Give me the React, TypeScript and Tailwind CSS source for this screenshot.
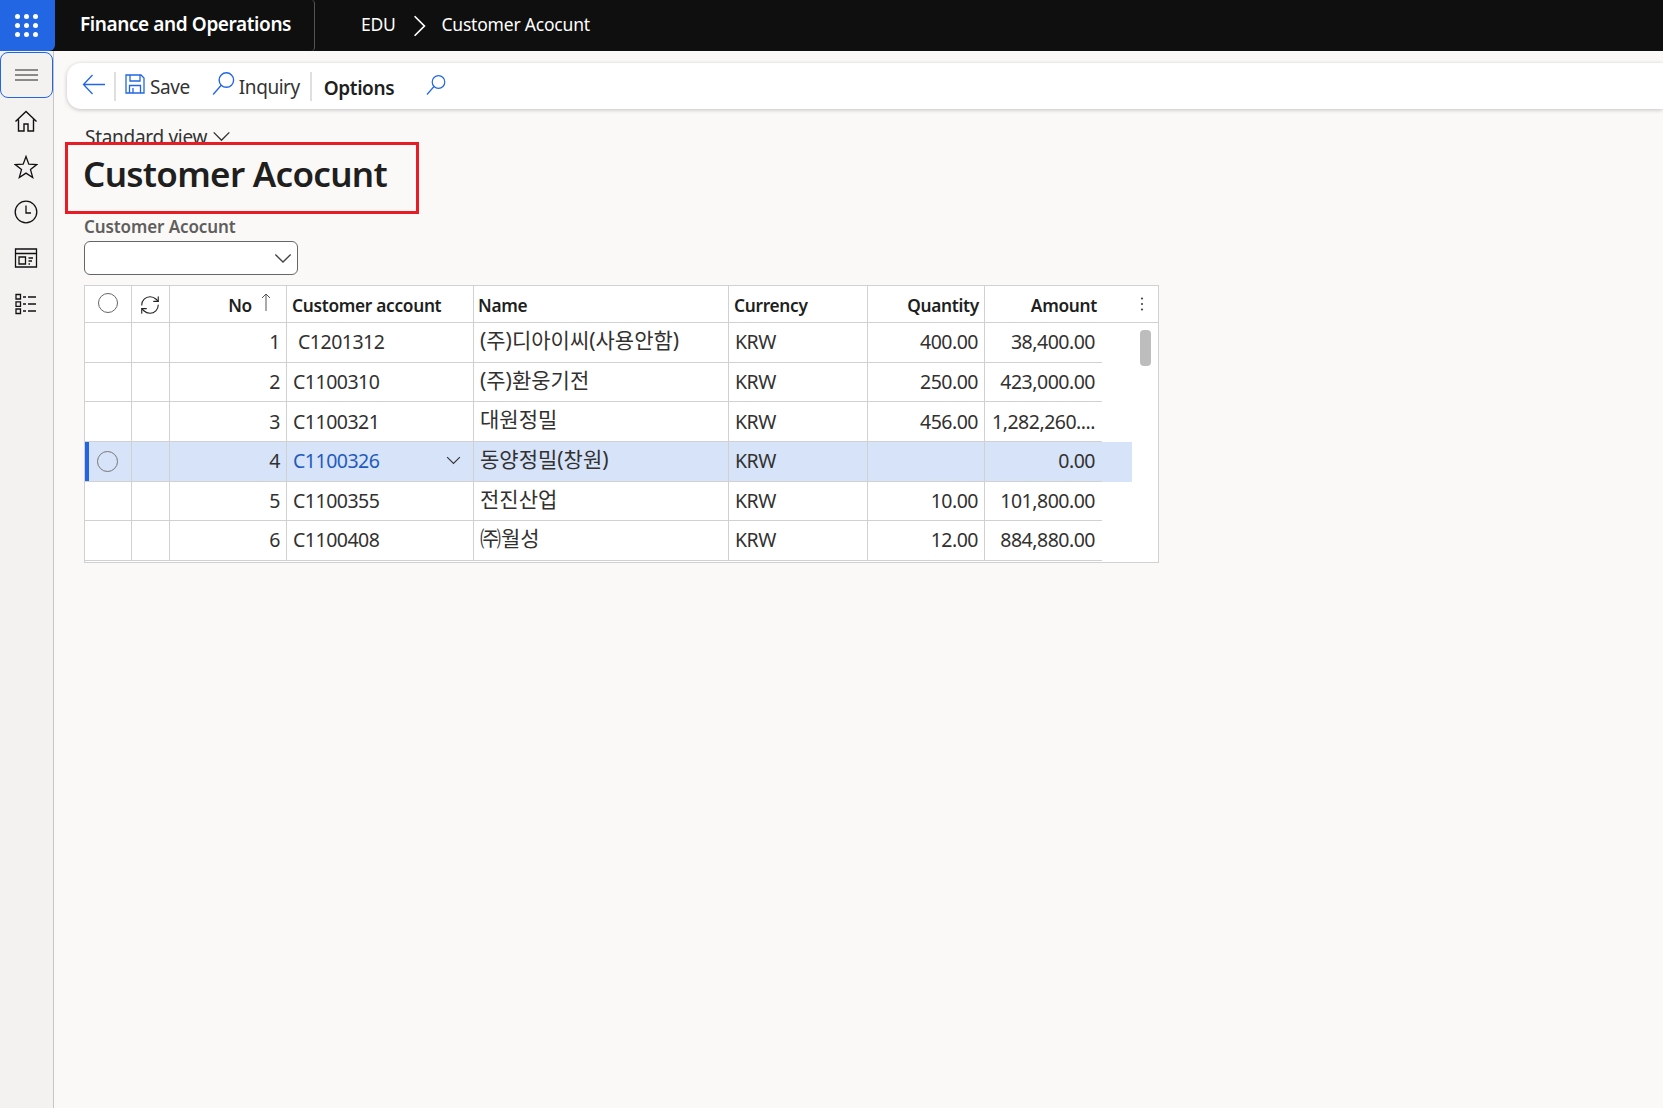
import React from 'react';
import { RefreshCw } from 'lucide-react';

const rows = [
  { no: 1, account: 'C1201312', name: '(주)디아이씨(사용안함)', currency: 'KRW', quantity: '400.00', amount: '38,400.00' },
  { no: 2, account: 'C1100310', name: '(주)환웅기전', currency: 'KRW', quantity: '250.00', amount: '423,000.00' },
  { no: 3, account: 'C1100321', name: '대원정밀', currency: 'KRW', quantity: '456.00', amount: '1,282,260....' },
  { no: 4, account: 'C1100326', name: '동양정밀(창원)', currency: 'KRW', quantity: '', amount: '0.00' },
  { no: 5, account: 'C1100355', name: '전진산업', currency: 'KRW', quantity: '10.00', amount: '101,800.00' },
  { no: 6, account: 'C1100408', name: '㈜월성', currency: 'KRW', quantity: '12.00', amount: '884,880.00' }
];

const SELECTED_NO = 4;

const Chevron = ({ className }: { className: string }) => (
  <svg viewBox="0 0 20 12" fill="none" stroke="currentColor" strokeWidth="1.5" className={className}>
    <path d="M1.500 1.500l8.500 8.500 8.500-8.500" />
  </svg>
);

const SearchGlass = ({ className }: { className: string }) => (
  <svg viewBox="0 0 20 20" fill="none" stroke="#2266e3" strokeWidth="1.2" className={className}>
    <circle cx="12.500" cy="7" r="6.300" />
    <path d="M8 11.500L1 19.500" />
  </svg>
);

const SideIcons = () => (
  <div className="flex flex-col items-center gap-[21.7px] mt-[11px] pr-[1px] text-[#111]">
    <svg viewBox="0 0 24 24" fill="none" stroke="currentColor" strokeWidth="1.4" className="w-6 h-6">
      <path d="M1.500 12.500L12 2.500l10.500 10M4.500 10.500V22h5.500v-7h4v7h5.500V10.500" />
    </svg>
    <svg viewBox="0 0 24 24" fill="none" stroke="currentColor" strokeWidth="1.3" className="w-6 h-6">
      <path d="M12 1.500l2.800 7.700 8 .4-6.300 5 2.200 7.900-6.700-4.400-6.700 4.400 2.200-7.900-6.300-5 8-.4z" />
    </svg>
    <svg viewBox="0 0 24 24" fill="none" stroke="currentColor" strokeWidth="1.3" className="w-6 h-6">
      <circle cx="12" cy="12" r="10.800" />
      <path d="M12 5.500V13h5" />
    </svg>
    <svg viewBox="0 0 24 24" fill="none" stroke="currentColor" strokeWidth="1.3" className="w-6 h-6">
      <path d="M1.500 3h21v18h-21zM1.500 7.500h21M5 11h6.500v7H5zM14.500 12h4.500M14.500 15h3.500M14.500 18h1.500" />
    </svg>
    <svg viewBox="0 0 24 24" fill="none" stroke="currentColor" strokeWidth="1.3" className="w-6 h-6">
      <path d="M2 2.500h4.500V7H2zM2 9.800h4.500v4.500H2zM2 17h4.500v4.500H2zM9 5h3M14 5h8M9 12h3M14 12h8M9 19h3M14 19h8" />
    </svg>
  </div>
);

const App: React.FC = () => {
  return (
    <div className="flex flex-col h-[1108px] overflow-hidden bg-[#faf9f8] text-[#201f1e] font-['Noto_Sans','Noto_Sans_CJK_KR',sans-serif]">
      {/* Top bar */}
      <div className="flex items-center h-[51px] shrink-0 bg-[#0f0f0f] text-white">
        <div className="flex items-center justify-center w-[55px] h-[51px] pr-[2px] bg-[#2266e3] rounded-br-[6px]">
          <div className="grid grid-cols-3 gap-[4px]">
            {Array.from({ length: 9 }).map((_, i) => (
              <span key={i} className="w-[5px] h-[5px] rounded-full bg-white" />
            ))}
          </div>
        </div>
        <div className="flex items-center w-[260px] h-full pl-[25px] pb-[3px] border-r border-[#555] rounded-r-[4px]">
          <span className="text-[19px] font-semibold tracking-[-0.4px] whitespace-nowrap">Finance and Operations</span>
        </div>
        <span className="ml-[46px] pb-[2px] text-[17.5px] tracking-[-0.3px]">EDU</span>
        <svg viewBox="0 0 12 20" fill="none" stroke="currentColor" strokeWidth="1.6" className="w-[13px] h-[22px] ml-[18px]">
          <path d="M1.500 1l9 9-9 9" />
        </svg>
        <span className="ml-[15px] pb-[2px] text-[17.5px] tracking-[-0.2px] whitespace-nowrap">Customer Acocunt</span>
      </div>

      <div className="flex flex-1 min-h-0">
        {/* Side navigation */}
        <div className="w-[54px] shrink-0 bg-[#f3f2f1] border-r border-[#c8c6c4]">
          <button className="flex items-center justify-center w-[53px] h-[46px] mt-[1px] border border-[#2266e3] rounded-[8px]">
            <svg viewBox="0 0 23 12" fill="none" stroke="#222" strokeWidth="1" className="w-[23px] h-[12px]">
              <path d="M0 1h23M0 6h23M0 11h23" />
            </svg>
          </button>
          <SideIcons />
        </div>

        <div className="flex-1 min-w-0">
          {/* Action bar */}
          <div className="flex items-center h-[46px] mt-[12px] ml-[13px] pl-[15px] bg-white rounded-l-[14px] shadow-[0_1px_4px_rgba(0,0,0,0.22)]">
            <svg viewBox="0 0 23 21" fill="none" stroke="#2266e3" strokeWidth="1.300" className="w-[23px] h-[21px] -mt-[3px]">
              <path d="M23 10.500H1.500M10.500 1l-9 9.500 9 9.500" />
            </svg>
            <span className="w-[2px] h-[29px] ml-[9px] bg-[#e1dfdd]" />
            <svg viewBox="0 0 20 20" fill="none" stroke="#2266e3" strokeWidth="1.300" className="w-[20px] h-[20px] ml-[9px] -mt-[5px]">
              <path d="M1 1h15l3 3v15H1zM5 1v6h10V1M4.500 19v-7.500h11V19M8 14v5" />
            </svg>
            <span className="ml-[5px] pt-[3px] text-[19px] text-[#333] tracking-[-0.4px]">Save</span>
            <SearchGlass className="w-[23px] h-[23px] ml-[22px] -mt-[6px]" />
            <span className="ml-[4px] pt-[3px] text-[19px] text-[#333] tracking-[-0.45px]">Inquiry</span>
            <span className="w-[2px] h-[29px] ml-[10px] bg-[#e1dfdd]" />
            <span className="ml-[12px] pt-[4px] text-[19px] font-semibold text-[#201f1e] tracking-[-0.4px]">Options</span>
            <SearchGlass className="w-[20px] h-[20px] ml-[32px] -mt-[3px]" />
          </div>

          {/* Form content */}
          <div className="pl-[30px]">
            <div className="flex items-center h-[26px] mt-[15px] pl-[1px] text-[19px] text-[#333] tracking-[-0.3px]">
              Standard view
              <Chevron className="w-[19px] h-[11px] ml-[5px] -mt-[2px]" />
            </div>

            <div className="relative flex items-start w-[354px] h-[72px] -mt-[8px] -ml-[19px] pl-[15px] pt-[6px] bg-[#faf9f8] border-[3px] border-[#e81c24]">
              <h1 className="text-[35px] leading-[46px] font-semibold tracking-[-0.7px] whitespace-nowrap text-[#201f1e]">Customer Acocunt</h1>
            </div>

            <div className="mt-[1px] h-[24px] leading-[24px] text-[17px] font-semibold text-[#605e5c] tracking-[-0.1px]">Customer Acocunt</div>

            <div className="flex items-center justify-end w-[214px] h-[34px] mt-[2px] pr-[5px] bg-white border border-[#666] rounded-[6px] text-[#444]">
              <Chevron className="w-[18px] h-[11px]" />
            </div>

            {/* Grid */}
            <div className="w-[1075px] mt-[10px] bg-white border border-[#d1d1d1] text-[19.5px] text-[#323130] tracking-[-0.5px]">
              <div className="flex h-[37px] border-b border-[#d1d1d1] text-[17.3px] font-semibold text-[#201f1e] tracking-[-0.3px]">
                <div className="flex items-center justify-center w-[47px] border-r border-[#d1d1d1]">
                  <span className="w-[20px] h-[20px] -mt-[2px] rounded-full border border-[#666]" />
                </div>
                <div className="flex items-center justify-center w-[38px] pr-[1px] border-r border-[#d1d1d1]">
                  <RefreshCw size={22} strokeWidth={1.2} className="text-[#222] mt-[1px]" />
                </div>
                <div className="flex items-center justify-end w-[117px] pr-[15px] pt-[3px] border-r border-[#d1d1d1]">
                  No
                  <svg viewBox="0 0 10 18" fill="none" stroke="#555" strokeWidth="1" className="w-[10px] h-[18px] ml-[9px] -mt-[7px]">
                    <path d="M5 18V1M1 5l4-4 4 4" />
                  </svg>
                </div>
                <div className="flex items-center w-[187px] pl-[5px] pt-[3px] border-r border-[#d1d1d1]">Customer account</div>
                <div className="flex items-center w-[255px] pl-[4px] pt-[3px] border-r border-[#d1d1d1]">Name</div>
                <div className="flex items-center w-[139px] pl-[5px] pt-[3px] border-r border-[#d1d1d1]">Currency</div>
                <div className="flex items-center justify-end w-[117px] pr-[5px] pt-[3px] border-r border-[#d1d1d1]">Quantity</div>
                <div className="flex items-center justify-end w-[117px] pr-[5px] pt-[3px]">Amount</div>
                <div className="flex flex-1 items-center justify-end pr-[14px] pb-[1px]">
                  <svg viewBox="0 0 4 14" fill="#333" className="w-[4px] h-[14px]">
                    <circle cx="2" cy="1.500" r="1" />
                    <circle cx="2" cy="7" r="1" />
                    <circle cx="2" cy="12.500" r="1" />
                  </svg>
                </div>
              </div>

              <div className="relative pb-[1px]">
                {rows.map((row) => {
                  const selected = row.no === SELECTED_NO;
                  return (
                    <div key={row.no} className="flex h-[39.67px]">
                      <div className={`flex border-b border-[#d1d1d1] ${selected ? 'bg-[#d6e3f9]' : 'bg-white'}`}>
                        <div className={`flex items-center justify-center w-[47px] border-r border-[#d1d1d1] ${selected ? 'border-l-[4px] border-l-[#2266e3] pr-[5px]' : ''}`}>
                          {selected && <span className="w-[21px] h-[21px] rounded-full border border-[#777]" />}
                        </div>
                        <div className="w-[38px] border-r border-[#d1d1d1]" />
                        <div className="flex items-center justify-end w-[117px] pr-[6px] pb-[1px] border-r border-[#d1d1d1]">{row.no}</div>
                        <div className={`flex items-center justify-between w-[187px] pb-[1px] border-r border-[#d1d1d1] ${row.no === 1 ? 'pl-[11px]' : 'pl-[6px]'}`}>
                          <span className={selected ? 'text-[#1f5bbd]' : ''}>{row.account}</span>
                          {selected && <Chevron className="w-[15px] h-[9px] mr-[12px] text-[#333]" />}
                        </div>
                        <div className="flex items-center w-[255px] pl-[6px] pb-[3px] border-r border-[#d1d1d1] whitespace-nowrap text-[21px] tracking-normal">{row.name}</div>
                        <div className="flex items-center w-[139px] pl-[6px] pb-[1px] border-r border-[#d1d1d1]">{row.currency}</div>
                        <div className="flex items-center justify-end w-[117px] pr-[6px] pb-[1px] border-r border-[#d1d1d1]">{row.quantity}</div>
                        <div className="flex items-center justify-end w-[117px] pr-[7px] pb-[1px] whitespace-nowrap">{row.amount}</div>
                      </div>
                      {selected && <div className="w-[30px] bg-[#d6e3f9]" />}
                    </div>
                  );
                })}
                <div className="absolute top-[7px] right-[7px] w-[11px] h-[36px] rounded-[4px] bg-[#bdbdbd]" />
              </div>
            </div>
          </div>
        </div>
      </div>
    </div>
  );
};

export default App;
